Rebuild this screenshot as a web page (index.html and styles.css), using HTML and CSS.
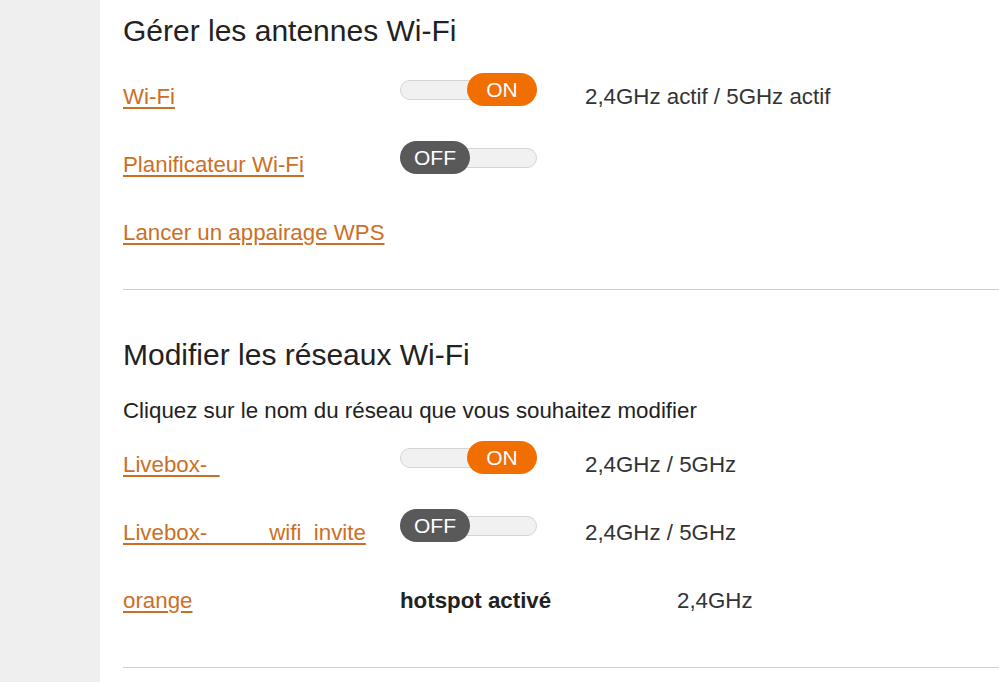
FILE: index.html
```html
<!DOCTYPE html>
<html lang="fr">
<head>
  <meta charset="UTF-8">
  <meta name="viewport" content="width=device-width, initial-scale=1.0">
  <title>Wi-Fi</title>
  <link rel="stylesheet" href="styles.css">
</head>
<body>
  <div class="sidebar"></div>
  <div class="content">
    <h1>Gérer les antennes Wi-Fi</h1>
    <div class="row">
      <a href="#" class="link">Wi-Fi</a>
      <div class="switch on"><span class="knob">ON</span></div>
      <span class="status">2,4GHz actif / 5GHz actif</span>
    </div>
    <div class="row">
      <a href="#" class="link">Planificateur Wi-Fi</a>
      <div class="switch off"><span class="knob">OFF</span></div>
    </div>
    <div class="row">
      <a href="#" class="link">Lancer un appairage WPS</a>
    </div>
    <hr class="divider">

    <h1 class="second">Modifier les réseaux Wi-Fi</h1>
    <p class="hint">Cliquez sur le nom du réseau que vous souhaitez modifier</p>
    <div class="row">
      <a href="#" class="link">Livebox-&nbsp;&nbsp;</a>
      <div class="switch on"><span class="knob">ON</span></div>
      <span class="status">2,4GHz / 5GHz</span>
    </div>
    <div class="row">
      <a href="#" class="link">Livebox-&nbsp;&nbsp;&nbsp;&nbsp;&nbsp;&nbsp;&nbsp;&nbsp;_wifi_invite</a>
      <div class="switch off"><span class="knob">OFF</span></div>
      <span class="status">2,4GHz / 5GHz</span>
    </div>
    <div class="row hotspot">
      <a href="#" class="link">orange</a>
      <strong>hotspot activé</strong>
      <span class="status">2,4GHz</span>
    </div>
    <hr class="divider last">
  </div>
</body>
</html>
```

FILE: styles.css
```css
body {
  margin: 0;
  display: flex;
  min-height: 100vh;
  font-family: "Liberation Sans", Arial, sans-serif;
  font-size: 22.3px;
  color: #333;
  background-color: #fff;
}
.sidebar {
  width: 100px;
  flex-shrink: 0;
  background-color: #efefef;
}
.content {
  flex: 1;
  padding: 15px 0 0 23px;
}
h1 {
  margin: 0 0 16px;
  font-size: 30px;
  font-weight: normal;
  line-height: 32px;
  color: #222;
}
h1.second {
  margin: 49px 0 0;
}
.hint {
  margin: 28px 0 8px;
  line-height: 24px;
  color: #222;
}
.row {
  display: grid;
  grid-template-columns: 277px 185px auto;
  align-items: center;
  height: 68px;
}
.row.hotspot {
  grid-template-columns: 277px 277px auto;
}
.row strong {
  color: #222;
}
.link {
  justify-self: start;
  color: #cc6f26;
  text-decoration: underline;
  text-underline-offset: 3px;
}
.status {
  color: #333;
}
.switch {
  position: relative;
  width: 137px;
  height: 34px;
  margin-top: -14px;
}
.switch::before {
  content: "";
  position: absolute;
  left: 0;
  right: 0;
  top: 7px;
  height: 18px;
  border: 1px solid #d4d4d4;
  border-radius: 10px;
  background-color: #f1f1f1;
}
.knob {
  position: absolute;
  top: 0;
  width: 70px;
  height: 33px;
  border-radius: 17px;
  color: #fff;
  font-size: 21px;
  line-height: 33px;
  text-align: center;
}
.switch.on .knob {
  right: 0;
  background-color: #f16e00;
}
.switch.off .knob {
  left: 0;
  background-color: #595959;
}
.divider {
  margin: 22px 0 0;
  border: none;
  border-top: 1px solid #cfcfcf;
}
.divider.last {
  margin-top: 32px;
}
```
